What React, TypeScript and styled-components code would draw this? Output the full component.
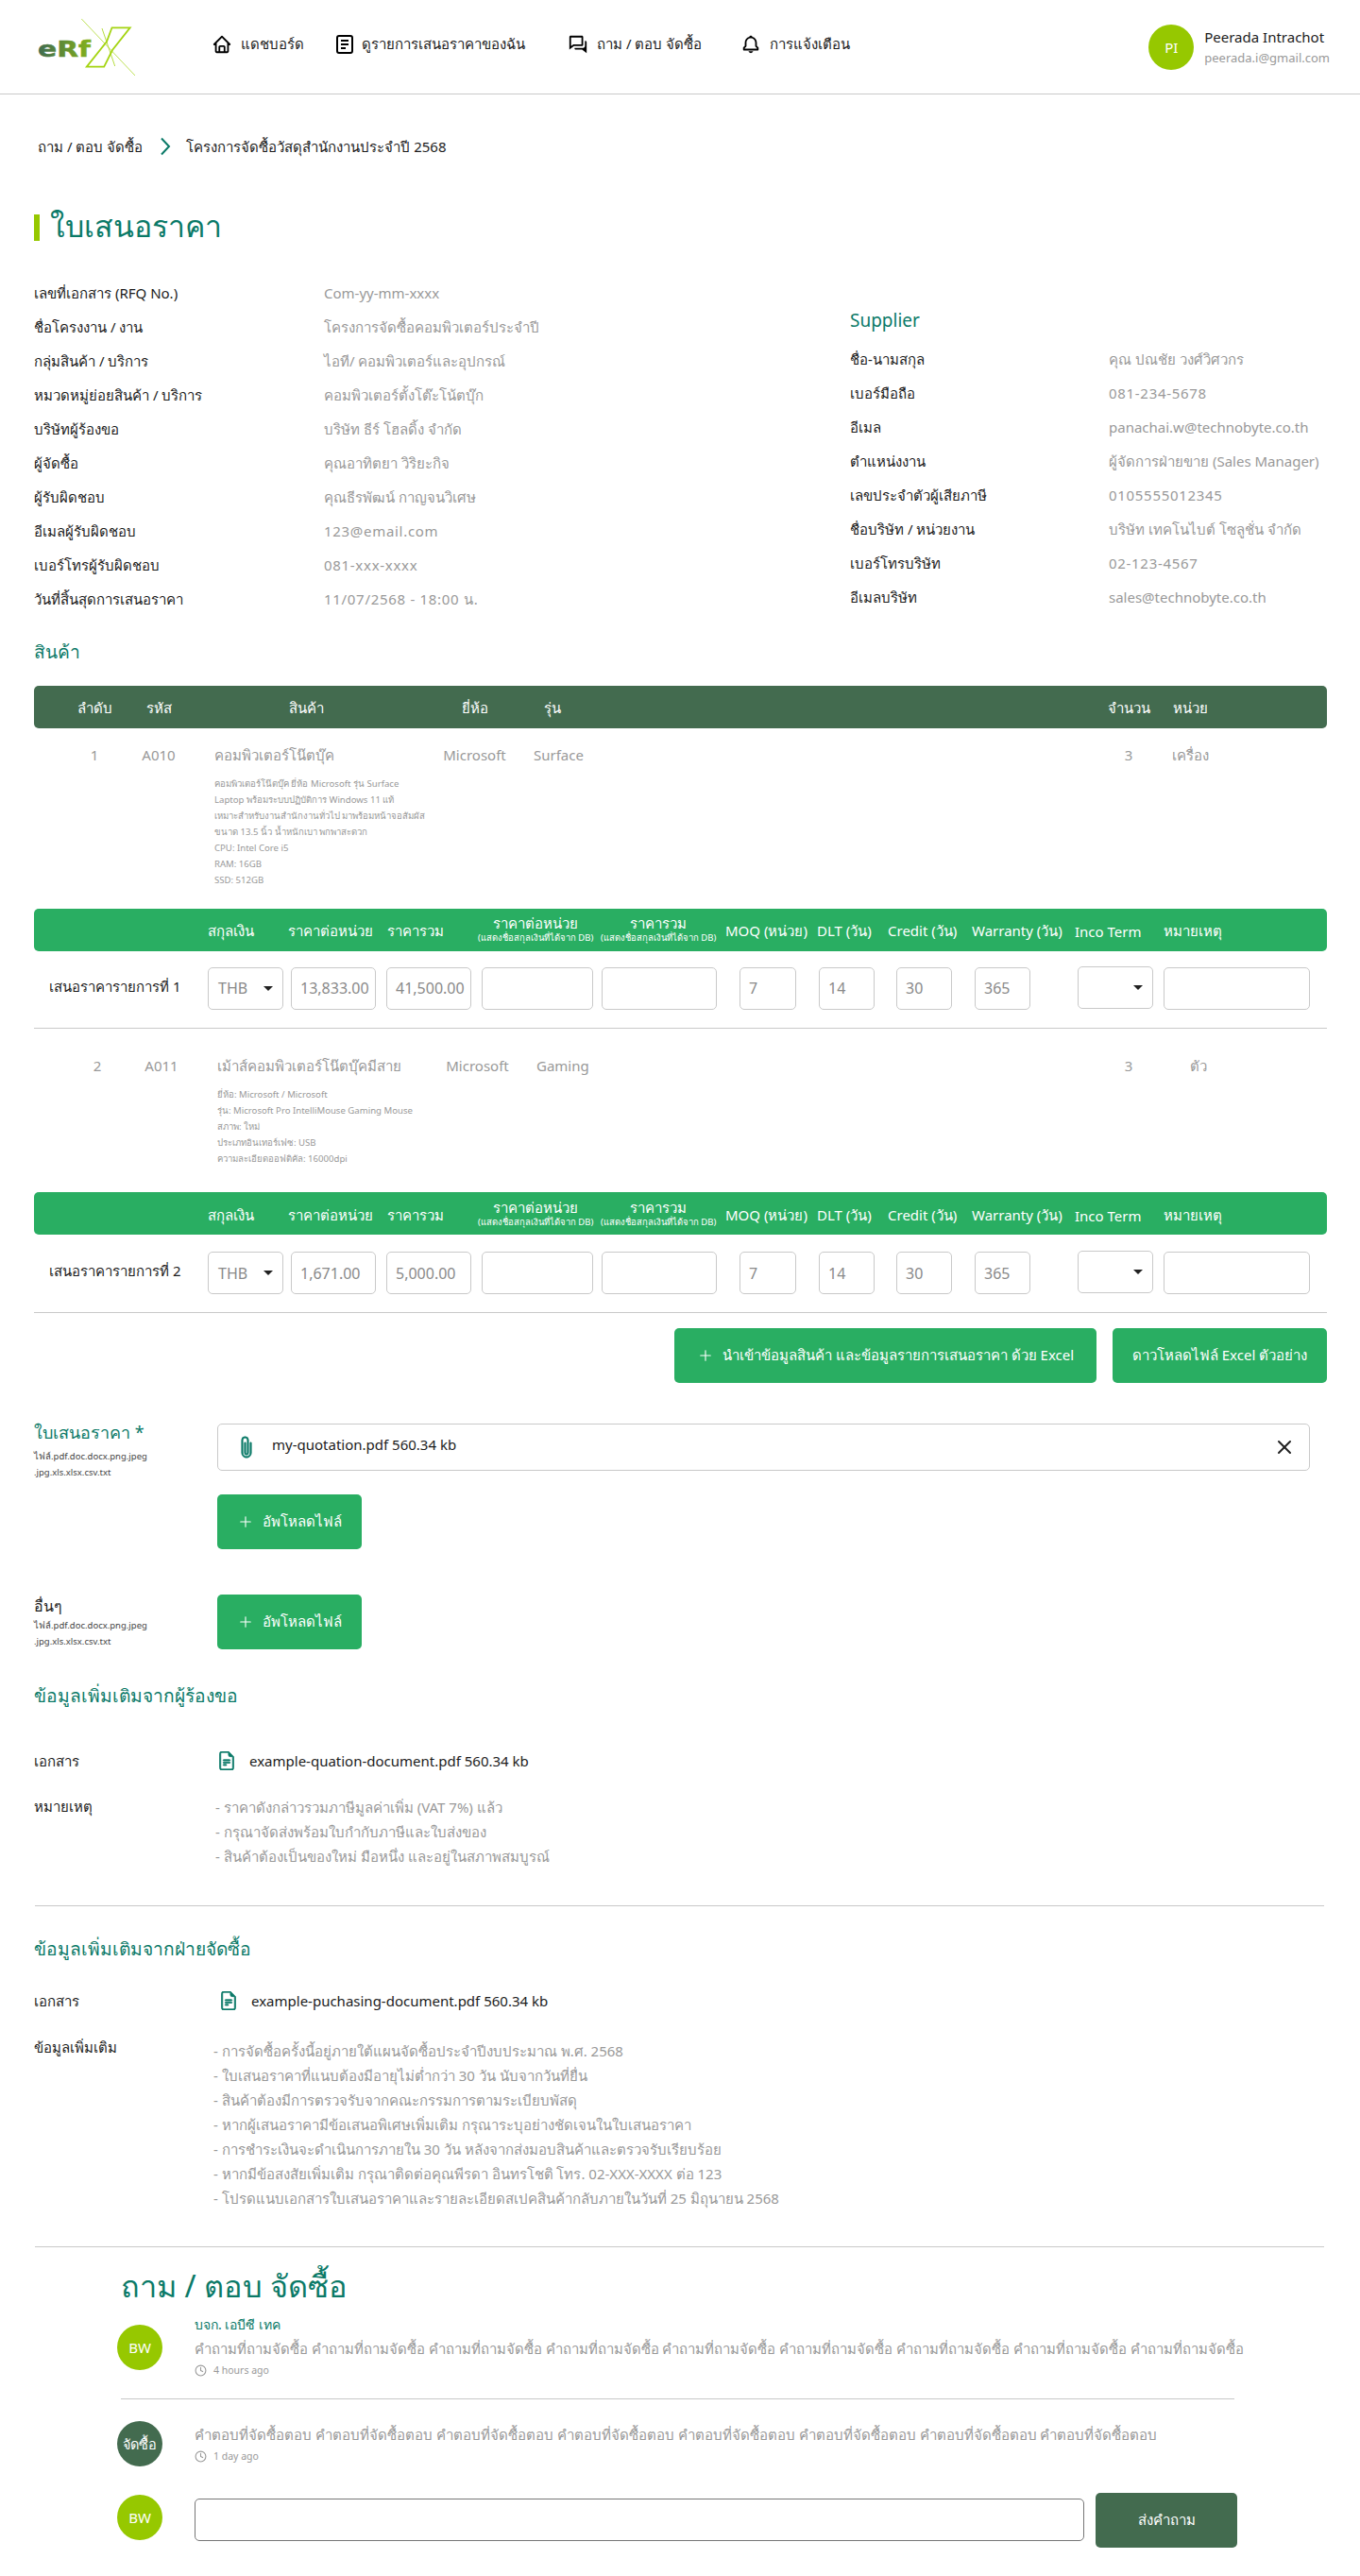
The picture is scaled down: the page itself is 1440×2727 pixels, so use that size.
import React from "react";
import styled, { createGlobalStyle } from "styled-components";
import { BiHome, BiConversation, BiBell } from "react-icons/bi";
import { BsPaperclip, BsFileEarmarkText } from "react-icons/bs";
import { Plus, X, Clock } from "lucide-react";

const TEAL = "#0b7a68";
const LIME = "#96c800";
const DARK = "#436b4f";
const GREEN = "#29ae62";
const LINE = "#c9c9c9";
const GRAY = "#999999";
const INK = "#1c1c1c";

const Global = createGlobalStyle`
  html, body { margin: 0; padding: 0; background: #fff; }
  body { font-family: "Noto Sans", Roboto, sans-serif; color: ${INK}; font-size: 16px; font-weight: 400; }
  * { box-sizing: border-box; }
`;

const TopBar = styled.header`
  height: 100px;
  border-bottom: 1px solid ${LINE};
  display: flex;
  align-items: center;
  padding: 0 32px 0 39px;
`;
const LogoSvg = styled.svg`
  width: 104px;
  height: 60px;
  flex: none;
`;
const Nav = styled.nav`
  display: flex;
  align-items: center;
  margin-left: 81px;
  flex: 1;
  margin-top: -6px;
`;
const NavItem = styled.a<{ $w: number }>`
  display: flex;
  align-items: center;
  gap: 9px;
  width: ${(p) => p.$w}px;
  font-size: 15px;
  white-space: nowrap;
  color: ${INK};
  svg { flex: none; }
`;
const UserBox = styled.div`
  display: flex;
  align-items: center;
  gap: 11px;
`;
const Avatar = styled.div<{ $bg?: string; $small?: boolean }>`
  width: 48px;
  height: 48px;
  border-radius: 50%;
  flex: none;
  background: ${(p) => p.$bg || LIME};
  color: #fff;
  display: flex;
  align-items: center;
  justify-content: center;
  font-size: ${(p) => (p.$small ? 14.5 : 15)}px;
  white-space: nowrap;
`;
const UserName = styled.div`
  font-size: 15px;
  line-height: 22px;
`;
const UserMail = styled.div`
  font-size: 13px;
  line-height: 22px;
  color: ${GRAY};
`;

const Main = styled.main`
  padding: 0 35px 30px 36px;
`;
const Crumbs = styled.div`
  margin-top: 43px;
  height: 24px;
  display: flex;
  align-items: center;
  padding-left: 4px;
  font-size: 15px;
  line-height: 24px;
  svg { margin: 0 16px 0 18px; }
`;
const Title = styled.h1`
  margin: 60px 0 0;
  height: 28px;
  border-left: 6px solid ${LIME};
  padding-left: 11px;
  font-size: 32px;
  line-height: 24px;
  font-weight: 400;
  color: ${TEAL};
  white-space: nowrap;
`;
const InfoGrid = styled.section`
  margin-top: 37px;
  display: grid;
  grid-template-columns: 864px 1fr;
`;
const InfoRow = styled.div<{ $label: number }>`
  display: grid;
  grid-template-columns: ${(p) => p.$label}px 1fr;
  height: 36px;
  line-height: 36px;
  font-size: 15px;
  white-space: nowrap;
`;
const InfoValue = styled.span<{ $num?: boolean }>`
  color: ${GRAY};
  letter-spacing: ${(p) => (p.$num ? 0.7 : 0)}px;
`;
const SupplierTitle = styled.h3`
  margin: 33px 0 9px;
  height: 28px;
  line-height: 28px;
  font-size: 19px;
  font-weight: 400;
  color: ${TEAL};
`;
const SectionHead = styled.h3<{ $top: number }>`
  margin: ${(p) => p.$top}px 0 0;
  height: 28px;
  line-height: 28px;
  font-size: 19.2px;
  font-weight: 400;
  color: ${TEAL};
  white-space: nowrap;
`;

const ITEM_COLS = "36px 56px 80px 232px 125px 1fr 60px 70px 110px";
const ITEM_COLS_ALT = "39px 56px 80px 232px 125px 1fr 60px 88px 92px";

const DarkBar = styled.div`
  margin-top: 22px;
  height: 45px;
  padding-top: 2px;
  border-radius: 5px;
  background: ${DARK};
  color: #fff;
  display: grid;
  grid-template-columns: ${ITEM_COLS};
  align-items: center;
  font-size: 15px;
  text-align: center;
  white-space: nowrap;
`;
const BarCell = styled.span<{ $col: number; $left?: boolean; $shift?: number }>`
  grid-column: ${(p) => p.$col};
  text-align: ${(p) => (p.$left ? "left" : "center")};
  padding-left: ${(p) => p.$shift || 0}px;
`;
const ItemRow = styled.div<{ $top: number; $bottom: number; $cols: string }>`
  display: grid;
  grid-template-columns: ${(p) => p.$cols};
  padding: ${(p) => p.$top}px 0 ${(p) => p.$bottom}px;
  color: ${GRAY};
  font-size: 15px;
  line-height: 24px;
  white-space: nowrap;
`;
const ItemCell = styled.span<{ $col: number; $left?: boolean }>`
  grid-column: ${(p) => p.$col};
  text-align: ${(p) => (p.$left ? "left" : "center")};
`;
const ProductCell = styled.div`
  grid-column: 4;
  padding-left: 19px;
`;
const DescList = styled.div`
  margin-top: 10px;
  font-size: 9.6px;
  line-height: 17px;
  color: ${GRAY};
`;

const HEAD_COLS = "184px 85px 105px 96px 130px 132px 97px 75px 89px 109px 94px 1fr";
const FIELD_COLS = "184px 88px 101px 101px 127px 146px 84px 82px 83px 109px 91px 1fr";

const GreenBar = styled.div`
  height: 45px;
  border-radius: 5px;
  background: ${GREEN};
  color: #fff;
  display: grid;
  grid-template-columns: ${HEAD_COLS};
  align-items: center;
  font-size: 15px;
  white-space: nowrap;
`;
const GreenCell = styled.span<{ $col: number }>`
  grid-column: ${(p) => p.$col};
  padding-top: 4px;
`;
const StackCell = styled.span<{ $col: number }>`
  grid-column: ${(p) => p.$col};
  width: 122px;
  text-align: center;
  font-size: 15px;
  line-height: 17px;
  display: block;
  small { display: block; font-size: 9.5px; line-height: 13px; }
`;
const QuoteRow = styled.div<{ $top: number; $h: number }>`
  display: grid;
  grid-template-columns: ${FIELD_COLS};
  height: ${(p) => p.$h}px;
  padding-top: ${(p) => p.$top}px;
  border-bottom: 1px solid ${LINE};
  align-items: start;
`;
const QuoteLabel = styled.div`
  padding-left: 16px;
  line-height: 40px;
  font-size: 15px;
  white-space: nowrap;
`;
const Field = styled.input<{ $w: number }>`
  width: ${(p) => p.$w}px;
  height: 45px;
  border: 1px solid ${LINE};
  border-radius: 5px;
  padding: 0 2px 0 9px;
  font: inherit;
  font-size: 16px;
  color: #8a8a8a;
  background: #fff;
  outline: none;
`;
const SelectBox = styled.div<{ $raised?: boolean }>`
  width: 80px;
  height: 45px;
  border: 1px solid ${LINE};
  border-radius: 5px;
  padding: 0 10px;
  display: flex;
  align-items: center;
  justify-content: space-between;
  font-size: 16px;
  color: #8a8a8a;
  margin-top: ${(p) => (p.$raised ? -1 : 0)}px;
`;
const Caret = styled.i`
  width: 0;
  height: 0;
  border-left: 5px solid transparent;
  border-right: 5px solid transparent;
  border-top: 5px solid #222;
  margin-left: auto;
`;
const ActionRow = styled.div`
  margin-top: 16px;
  display: flex;
  justify-content: flex-end;
  gap: 17px;
`;
const GreenButton = styled.button<{ $w: number }>`
  width: ${(p) => p.$w}px;
  height: 58px;
  border: 0;
  border-radius: 5px;
  background: ${GREEN};
  color: #fff;
  font: inherit;
  font-size: 15px;
  display: flex;
  align-items: center;
  justify-content: center;
  gap: 9px;
  white-space: nowrap;
  padding: 0;
`;
const UploadRow = styled.div<{ $top: number }>`
  margin-top: ${(p) => p.$top}px;
  display: grid;
  grid-template-columns: 194px 1fr;
`;
const UploadTitle = styled.div<{ $teal?: boolean }>`
  font-size: ${(p) => (p.$teal ? 18 : 16)}px;
  line-height: ${(p) => (p.$teal ? 28 : 24)}px;
  color: ${(p) => (p.$teal ? TEAL : INK)};
  white-space: nowrap;
`;
const UploadHint = styled.div<{ $gap?: number }>`
  margin-top: ${(p) => p.$gap || 0}px;
  font-size: 9.5px;
  line-height: 17px;
  color: #444;
  white-space: nowrap;
`;
const UploadBody = styled.div<{ $top?: number }>`
  padding-top: ${(p) => p.$top || 0}px;
`;
const FileBox = styled.div`
  height: 50px;
  margin: 0 18px 25px 0;
  border: 1px solid ${LINE};
  border-radius: 5px;
  display: flex;
  align-items: center;
  padding: 0 14px 0 18px;
  gap: 15px;
  font-size: 15px;
  span { flex: 1; margin-top: -6px; }
`;
const DocRow = styled.div<{ $top: number; $label: number }>`
  margin-top: ${(p) => p.$top}px;
  display: grid;
  grid-template-columns: ${(p) => p.$label}px 1fr;
  font-size: 15px;
  line-height: 24px;
  white-space: nowrap;
`;
const DocLink = styled.div`
  display: flex;
  align-items: center;
  gap: 14px;
  svg { flex: none; }
`;
const NoteRow = styled.div<{ $top: number; $label: number }>`
  margin-top: ${(p) => p.$top}px;
  display: grid;
  grid-template-columns: ${(p) => p.$label}px 1fr;
  font-size: 15px;
  line-height: 24px;
`;
const NoteList = styled.div<{ $pad: number }>`
  padding-top: ${(p) => p.$pad}px;
  color: ${GRAY};
  line-height: 26px;
  white-space: nowrap;
`;
const Rule = styled.hr<{ $top: number }>`
  margin: ${(p) => p.$top}px 3px 0 1px;
  border: 0;
  border-top: 1px solid ${LINE};
`;
const QaSection = styled.section`
  padding-left: 88px;
  width: 1274px;
`;
const QaTitle = styled.h2`
  margin: 23px 0 0 4px;
  font-size: 32.5px;
  line-height: 36px;
  padding-bottom: 4px;
  font-weight: 400;
  color: ${TEAL};
  white-space: nowrap;
`;
const Comment = styled.div<{ $top: number; $avatarTop: number }>`
  margin-top: ${(p) => p.$top}px;
  display: grid;
  grid-template-columns: 82px 1fr;
  > :first-child { margin-top: ${(p) => p.$avatarTop}px; }
`;
const CommentBody = styled.div<{ $top?: number }>`
  padding-top: ${(p) => p.$top || 0}px;
`;
const Author = styled.div`
  font-size: 14px;
  line-height: 20px;
  color: ${TEAL};
  margin-bottom: 3px;
`;
const CommentText = styled.div<{ $size: number }>`
  font-size: ${(p) => p.$size}px;
  line-height: 24px;
  color: ${GRAY};
  white-space: nowrap;
`;
const Timestamp = styled.div`
  margin-top: 4px;
  display: flex;
  align-items: center;
  gap: 7px;
  font-size: 10.5px;
  line-height: 14px;
  color: ${GRAY};
`;
const QaRule = styled.hr`
  margin: 23px 3px 0 4px;
  border: 0;
  border-top: 1px solid ${LINE};
`;
const Composer = styled.div`
  margin-top: 28px;
  display: grid;
  grid-template-columns: 82px 1fr 150px;
  align-items: start;
`;
const ComposerAvatar = styled(Avatar)`
  margin-top: 2px;
`;
const ComposerInput = styled.input`
  margin-top: 6px;
  width: 942px;
  height: 45px;
  border: 1px solid #777;
  border-radius: 5px;
  outline: none;
`;
const SendButton = styled.button`
  height: 58px;
  border: 0;
  border-radius: 5px;
  background: ${DARK};
  color: #fff;
  font: inherit;
  font-size: 15px;
`;

const Logo = () => (
  <LogoSvg viewBox="0 0 104 60" aria-label="eRfX logo">
    <defs>
      <linearGradient id="lg" x1="0" x2="1" y1="0" y2="0">
        <stop offset="0" stopColor="#3f6b50" />
        <stop offset="1" stopColor="#86b418" />
      </linearGradient>
    </defs>
    <text x="1" y="40" fontFamily="'DejaVu Sans', sans-serif" fontWeight="700" fontSize="23" textLength="56" lengthAdjust="spacingAndGlyphs" fill="url(#lg)" stroke="url(#lg)" strokeWidth="0.5">eRf</text>
    <path d="M79.5 9.3 L98.7 9.3 L80 33 L71.2 50.7 L52.8 50.7 L74 24 Z" fill="#fff" stroke="#a4d411" strokeWidth="1.8" strokeLinejoin="miter" />
    <path d="M47.3 0 L104 60" stroke="#a4d411" strokeWidth="0.7" fill="none" />
    <path d="M69 10 L82.7 50" stroke="#a4d411" strokeWidth="0.8" fill="none" />
  </LogoSvg>
);

const NoteIcon = () => (
  <svg width="18" height="20" viewBox="0 0 18 20" fill="none" stroke="#000" strokeWidth="2">
    <rect x="1" y="1" width="16" height="18" rx="2" />
    <path d="M5 6h8M5 10h8M5 14h5" />
  </svg>
);

const Chevron = () => (
  <svg width="12" height="20" viewBox="0 0 12 20" fill="none" stroke={TEAL} strokeWidth="2">
    <path d="M2 1.5 L10 10 L2 18.5" />
  </svg>
);

const leftInfo: [string, string][] = [
  ["เลขที่เอกสาร (RFQ No.)", "Com-yy-mm-xxxx"],
  ["ชื่อโครงงาน / งาน", "โครงการจัดซื้อคอมพิวเตอร์ประจำปี"],
  ["กลุ่มสินค้า / บริการ", "ไอที/ คอมพิวเตอร์และอุปกรณ์"],
  ["หมวดหมู่ย่อยสินค้า / บริการ", "คอมพิวเตอร์ตั้งโต๊ะโน้ตบุ๊ก"],
  ["บริษัทผู้ร้องขอ", "บริษัท ธีร์ โฮลดิ้ง จำกัด"],
  ["ผู้จัดซื้อ", "คุณอาทิตยา วิริยะกิจ"],
  ["ผู้รับผิดชอบ", "คุณธีรพัฒน์ กาญจนวิเศษ"],
  ["อีเมลผู้รับผิดชอบ", "123@email.com"],
  ["เบอร์โทรผู้รับผิดชอบ", "081-xxx-xxxx"],
  ["วันที่สิ้นสุดการเสนอราคา", "11/07/2568 - 18:00 น."],
];
const rightInfo: [string, string][] = [
  ["ชื่อ-นามสกุล", "คุณ ปณชัย วงศ์วิศวกร"],
  ["เบอร์มือถือ", "081-234-5678"],
  ["อีเมล", "panachai.w@technobyte.co.th"],
  ["ตำแหน่งงาน", "ผู้จัดการฝ่ายขาย (Sales Manager)"],
  ["เลขประจำตัวผู้เสียภาษี", "0105555012345"],
  ["ชื่อบริษัท / หน่วยงาน", "บริษัท เทคโนไบต์ โซลูชั่น จำกัด"],
  ["เบอร์โทรบริษัท", "02-123-4567"],
  ["อีเมลบริษัท", "sales@technobyte.co.th"],
];

const GreenHead = () => (
  <GreenBar>
    <GreenCell $col={2}>สกุลเงิน</GreenCell>
    <GreenCell $col={3}>ราคาต่อหน่วย</GreenCell>
    <GreenCell $col={4}>ราคารวม</GreenCell>
    <StackCell $col={5}>ราคาต่อหน่วย<small>(แสดงชื่อสกุลเงินที่ได้จาก DB)</small></StackCell>
    <StackCell $col={6}>ราคารวม<small>(แสดงชื่อสกุลเงินที่ได้จาก DB)</small></StackCell>
    <GreenCell $col={7}>MOQ (หน่วย)</GreenCell>
    <GreenCell $col={8}>DLT (วัน)</GreenCell>
    <GreenCell $col={9}>Credit (วัน)</GreenCell>
    <GreenCell $col={10}>Warranty (วัน)</GreenCell>
    <GreenCell $col={11}>Inco Term</GreenCell>
    <GreenCell $col={12}>หมายเหตุ</GreenCell>
  </GreenBar>
);

const Quote = ({ n, unit, total, top, h }: { n: number; unit: string; total: string; top: number; h: number }) => (
  <QuoteRow $top={top} $h={h}>
    <QuoteLabel>เสนอราคารายการที่ {n}</QuoteLabel>
    <SelectBox>THB<Caret /></SelectBox>
    <Field $w={90} readOnly value={unit} />
    <Field $w={90} readOnly value={total} />
    <Field $w={118} readOnly value="" />
    <Field $w={122} readOnly value="" />
    <Field $w={60} readOnly value="7" />
    <Field $w={59} readOnly value="14" />
    <Field $w={59} readOnly value="30" />
    <Field $w={59} readOnly value="365" />
    <SelectBox $raised><Caret /></SelectBox>
    <Field $w={155} readOnly value="" />
  </QuoteRow>
);

const QUESTION = Array(9).fill("คำถามที่ถามจัดซื้อ").join(" ");
const ANSWER = Array(8).fill("คำตอบที่จัดซื้อตอบ").join(" ");
const startsWithDigit = (v: string) => /^[0-9]/.test(v);

export default function App() {
  return (
    <>
      <Global />
      <TopBar>
        <Logo />
        <Nav>
          <NavItem $w={132}><BiHome size={22} color="#000" />แดชบอร์ด</NavItem>
          <NavItem $w={245}><NoteIcon />ดูรายการเสนอราคาของฉัน</NavItem>
          <NavItem $w={183}><BiConversation size={22} color="#000" />ถาม / ตอบ จัดซื้อ</NavItem>
          <NavItem $w={140}><BiBell size={22} color="#000" />การแจ้งเตือน</NavItem>
        </Nav>
        <UserBox>
          <Avatar>PI</Avatar>
          <div>
            <UserName>Peerada Intrachot</UserName>
            <UserMail>peerada.i@gmail.com</UserMail>
          </div>
        </UserBox>
      </TopBar>
      <Main>
        <Crumbs>ถาม / ตอบ จัดซื้อ<Chevron />โครงการจัดซื้อวัสดุสำนักงานประจำปี 2568</Crumbs>
        <Title>ใบเสนอราคา</Title>
        <InfoGrid>
          <div>
            {leftInfo.map(([k, v]) => (
              <InfoRow key={k} $label={307}><span>{k}</span><InfoValue $num={startsWithDigit(v)}>{v}</InfoValue></InfoRow>
            ))}
          </div>
          <div>
            <SupplierTitle>Supplier</SupplierTitle>
            {rightInfo.map(([k, v]) => (
              <InfoRow key={k} $label={274}><span>{k}</span><InfoValue $num={startsWithDigit(v)}>{v}</InfoValue></InfoRow>
            ))}
          </div>
        </InfoGrid>
        <SectionHead $top={24}>สินค้า</SectionHead>
        <DarkBar>
          <BarCell $col={2}>ลำดับ</BarCell>
          <BarCell $col={3}>รหัส</BarCell>
          <BarCell $col={4}>สินค้า</BarCell>
          <BarCell $col={5}>ยี่ห้อ</BarCell>
          <BarCell $col={6} $left $shift={11}>รุ่น</BarCell>
          <BarCell $col={7}>จำนวน</BarCell>
          <BarCell $col={8}>หน่วย</BarCell>
        </DarkBar>
        <ItemRow $top={16} $bottom={21.5} $cols={ITEM_COLS}>
          <ItemCell $col={2}>1</ItemCell>
          <ItemCell $col={3}>A010</ItemCell>
          <ProductCell>
            คอมพิวเตอร์โน๊ตบุ๊ค
            <DescList>
              <div>คอมพิวเตอร์โน๊ตบุ๊ค ยี่ห้อ Microsoft รุ่น Surface</div>
              <div>Laptop พร้อมระบบปฏิบัติการ Windows 11 แท้</div>
              <div>เหมาะสำหรับงานสำนักงานทั่วไป มาพร้อมหน้าจอสัมผัส</div>
              <div>ขนาด 13.5 นิ้ว น้ำหนักเบา พกพาสะดวก</div>
              <div>CPU: Intel Core i5</div>
              <div>RAM: 16GB</div>
              <div>SSD: 512GB</div>
            </DescList>
          </ProductCell>
          <ItemCell $col={5}>Microsoft</ItemCell>
          <ItemCell $col={6} $left>Surface</ItemCell>
          <ItemCell $col={7}>3</ItemCell>
          <ItemCell $col={8}>เครื่อง</ItemCell>
        </ItemRow>
        <GreenHead />
        <Quote n={1} unit="13,833.00" total="41,500.00" top={17} h={82} />
        <ItemRow $top={27} $bottom={27.5} $cols={ITEM_COLS_ALT}>
          <ItemCell $col={2}>2</ItemCell>
          <ItemCell $col={3}>A011</ItemCell>
          <ProductCell>
            เม้าส์คอมพิวเตอร์โน๊ตบุ๊คมีสาย
            <DescList>
              <div>ยี่ห้อ: Microsoft / Microsoft</div>
              <div>รุ่น: Microsoft Pro IntelliMouse Gaming Mouse</div>
              <div>สภาพ: ใหม่</div>
              <div>ประเภทอินเทอร์เฟซ: USB</div>
              <div>ความละเอียดออฟติคัล: 16000dpi</div>
            </DescList>
          </ProductCell>
          <ItemCell $col={5}>Microsoft</ItemCell>
          <ItemCell $col={6} $left>Gaming</ItemCell>
          <ItemCell $col={7}>3</ItemCell>
          <ItemCell $col={8}>ตัว</ItemCell>
        </ItemRow>
        <GreenHead />
        <Quote n={2} unit="1,671.00" total="5,000.00" top={18} h={83} />
        <ActionRow>
          <GreenButton $w={447}><Plus size={18} strokeWidth={1.5} />นำเข้าข้อมูลสินค้า และข้อมูลรายการเสนอราคา ด้วย Excel</GreenButton>
          <GreenButton $w={227}>ดาวโหลดไฟล์ Excel ตัวอย่าง</GreenButton>
        </ActionRow>
        <UploadRow $top={38}>
          <div>
            <UploadTitle $teal>ใบเสนอราคา *</UploadTitle>
            <UploadHint $gap={3}>ไฟล์.pdf.doc.docx.png.jpeg</UploadHint>
            <UploadHint>.jpg.xls.xlsx.csv.txt</UploadHint>
          </div>
          <UploadBody $top={5}>
            <FileBox>
              <BsPaperclip size={24} color={TEAL} strokeWidth={0.4} />
              <span>my-quotation.pdf 560.34 kb</span>
              <X size={24} color="#222" strokeWidth={2} />
            </FileBox>
            <GreenButton $w={153}><Plus size={18} strokeWidth={1.5} />อัพโหลดไฟล์</GreenButton>
          </UploadBody>
        </UploadRow>
        <UploadRow $top={48}>
          <div>
            <UploadTitle>อื่นๆ</UploadTitle>
            <UploadHint>ไฟล์.pdf.doc.docx.png.jpeg</UploadHint>
            <UploadHint>.jpg.xls.xlsx.csv.txt</UploadHint>
          </div>
          <UploadBody>
            <GreenButton $w={153}><Plus size={18} strokeWidth={1.5} />อัพโหลดไฟล์</GreenButton>
          </UploadBody>
        </UploadRow>
        <SectionHead $top={35}>ข้อมูลเพิ่มเติมจากผู้ร้องขอ</SectionHead>
        <DocRow $top={43} $label={194}>
          <span>เอกสาร</span>
          <DocLink><BsFileEarmarkText size={20} color={TEAL} strokeWidth={0.6} />example-quation-document.pdf 560.34 kb</DocLink>
        </DocRow>
        <NoteRow $top={24} $label={192}>
          <span>หมายเหตุ</span>
          <NoteList $pad={0}>
            <div>- ราคาดังกล่าวรวมภาษีมูลค่าเพิ่ม (VAT 7%) แล้ว</div>
            <div>- กรุณาจัดส่งพร้อมใบกำกับภาษีและใบส่งของ</div>
            <div>- สินค้าต้องเป็นของใหม่ มือหนึ่ง และอยู่ในสภาพสมบูรณ์</div>
          </NoteList>
        </NoteRow>
        <Rule $top={39} />
        <SectionHead $top={31}>ข้อมูลเพิ่มเติมจากฝ่ายจัดซื้อ</SectionHead>
        <DocRow $top={29} $label={196}>
          <span>เอกสาร</span>
          <DocLink><BsFileEarmarkText size={20} color={TEAL} strokeWidth={0.6} />example-puchasing-document.pdf 560.34 kb</DocLink>
        </DocRow>
        <NoteRow $top={25} $label={190}>
          <span>ข้อมูลเพิ่มเติม</span>
          <NoteList $pad={3}>
            <div>- การจัดซื้อครั้งนี้อยู่ภายใต้แผนจัดซื้อประจำปีงบประมาณ พ.ศ. 2568</div>
            <div>- ใบเสนอราคาที่แนบต้องมีอายุไม่ต่ำกว่า 30 วัน นับจากวันที่ยื่น</div>
            <div>- สินค้าต้องมีการตรวจรับจากคณะกรรมการตามระเบียบพัสดุ</div>
            <div>- หากผู้เสนอราคามีข้อเสนอพิเศษเพิ่มเติม กรุณาระบุอย่างชัดเจนในใบเสนอราคา</div>
            <div>- การชำระเงินจะดำเนินการภายใน 30 วัน หลังจากส่งมอบสินค้าและตรวจรับเรียบร้อย</div>
            <div>- หากมีข้อสงสัยเพิ่มเติม กรุณาติดต่อคุณพีรดา อินทรโชติ โทร. 02-XXX-XXXX ต่อ 123</div>
            <div>- โปรดแนบเอกสารใบเสนอราคาและรายละเอียดสเปคสินค้ากลับภายในวันที่ 25 มิถุนายน 2568</div>
          </NoteList>
        </NoteRow>
        <Rule $top={38} />
        <QaSection>
          <QaTitle>ถาม / ตอบ จัดซื้อ</QaTitle>
          <Comment $top={9} $avatarTop={10}>
            <Avatar>BW</Avatar>
            <CommentBody>
              <Author>บจก. เอบีซี เทค</Author>
              <CommentText $size={14.9}>{QUESTION}</CommentText>
              <Timestamp><Clock size={13} />4 hours ago</Timestamp>
            </CommentBody>
          </Comment>
          <QaRule />
          <Comment $top={23} $avatarTop={0}>
            <Avatar $bg={DARK} $small>จัดซื้อ</Avatar>
            <CommentBody $top={2}>
              <CommentText $size={15.1}>{ANSWER}</CommentText>
              <Timestamp><Clock size={13} />1 day ago</Timestamp>
            </CommentBody>
          </Comment>
          <Composer>
            <ComposerAvatar>BW</ComposerAvatar>
            <ComposerInput />
            <SendButton>ส่งคำถาม</SendButton>
          </Composer>
        </QaSection>
      </Main>
    </>
  );
}
